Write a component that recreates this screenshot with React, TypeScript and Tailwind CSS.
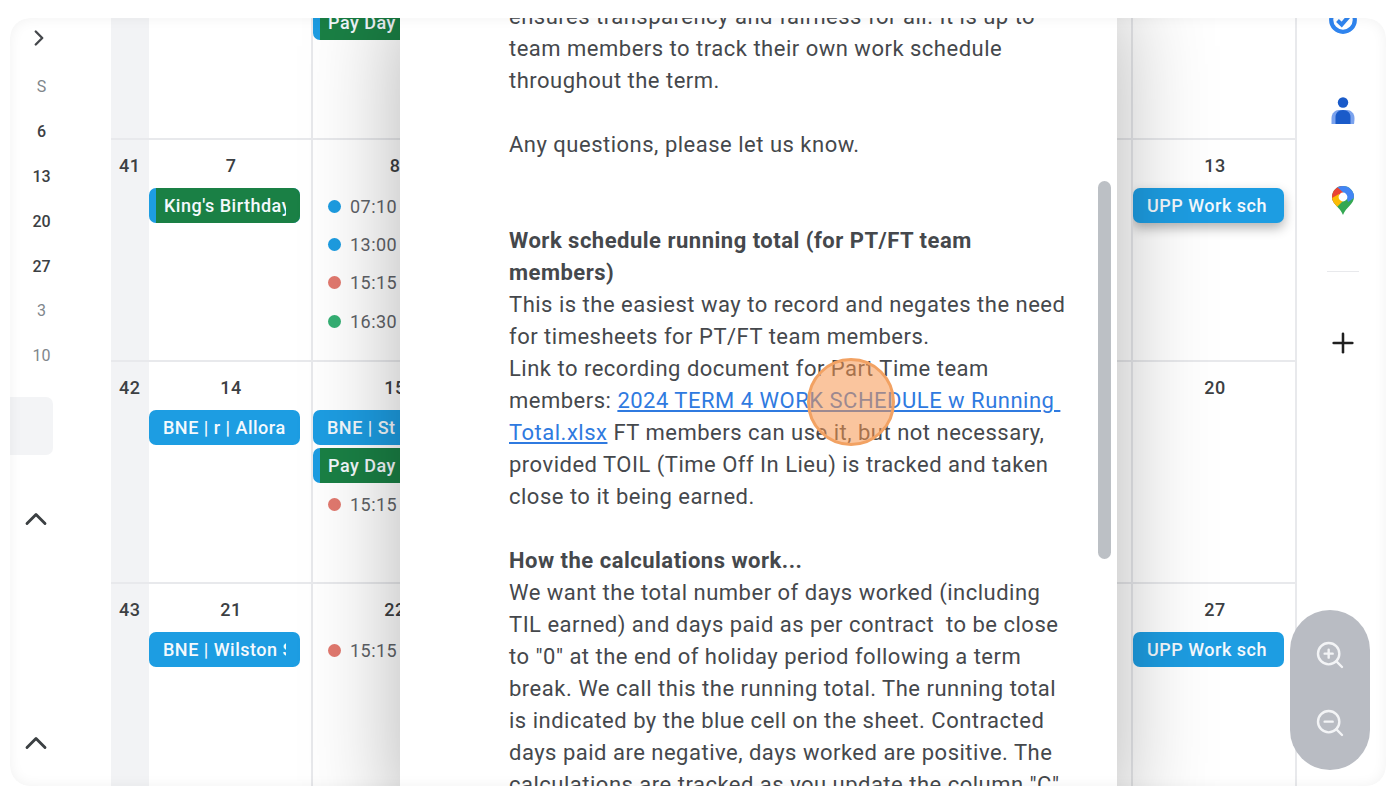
import { ChevronRight, ChevronUp, Plus, ZoomIn, ZoomOut } from "lucide-react";

type Chip = { label: string; kind: "blue" | "green"; raised?: boolean };
type Dot = { time: string; color: string };
type Day = { num?: string; chips?: Chip[]; dots?: Dot[]; pull?: boolean };

const BLUE = "bg-[#1d9de2]";
const DOT_BLUE = "bg-[#1d9de2]";
const DOT_RED = "bg-[#e2796f]";
const DOT_GREEN = "bg-[#35b074]";

const empty: Day = {};

const rows: { week?: string; height: string; days: Day[] }[] = [
  {
    height: "h-[122px] border-b-2",
    days: [empty, { chips: [{ label: "Pay Day", kind: "green" }], pull: true }, empty, empty, empty, empty, empty],
  },
  {
    week: "41",
    height: "h-[222px] border-b-2",
    days: [
      { num: "7", chips: [{ label: "King's Birthday", kind: "green" }] },
      {
        num: "8",
        dots: [
          { time: "07:10", color: DOT_BLUE },
          { time: "13:00", color: DOT_BLUE },
          { time: "15:15", color: DOT_RED },
          { time: "16:30", color: DOT_GREEN },
        ],
      },
      empty,
      empty,
      empty,
      empty,
      { num: "13", chips: [{ label: "UPP Work sch", kind: "blue", raised: true }] },
    ],
  },
  {
    week: "42",
    height: "h-[222px] border-b-2",
    days: [
      { num: "14", chips: [{ label: "BNE | r | Allora", kind: "blue" }] },
      {
        num: "15",
        chips: [
          { label: "BNE | St", kind: "blue" },
          { label: "Pay Day", kind: "green" },
        ],
        dots: [{ time: "15:15", color: DOT_RED }],
      },
      empty,
      empty,
      empty,
      empty,
      { num: "20" },
    ],
  },
  {
    week: "43",
    height: "h-[230px]",
    days: [
      { num: "21", chips: [{ label: "BNE | Wilston South", kind: "blue" }] },
      { num: "22", dots: [{ time: "15:15", color: DOT_RED }] },
      empty,
      empty,
      empty,
      empty,
      { num: "27", chips: [{ label: "UPP Work sch", kind: "blue" }] },
    ],
  },
];

function EventChip({ chip }: { chip: Chip }) {
  return (
    <div
      className={`flex h-[35px] w-[151px] overflow-hidden rounded-[7px] ${BLUE} ${
        chip.raised ? "shadow-[0_5px_12px_rgba(0,0,0,0.3)]" : ""
      }`}
    >
      {chip.kind === "green" && <div className="w-[7px] shrink-0" />}
      <div
        className={`flex min-w-0 flex-1 items-center pr-[14px] ${
          chip.kind === "green" ? "bg-[#1a8045] pl-[8px]" : "pl-[14px]"
        }`}
      >
        <span className="overflow-hidden text-[18px] leading-[35px] font-medium tracking-[0.5px] whitespace-nowrap text-[#f4f9fd]">
          {chip.label}
        </span>
      </div>
    </div>
  );
}

function DayCell({ day }: { day: Day }) {
  return (
    <div className="min-w-0 overflow-hidden border-r-2 border-[#e8e9ec]">
      {day.pull ? (
        <div className="-mt-[13px]">
          {day.chips?.map((c) => <EventChip key={c.label} chip={c} />)}
        </div>
      ) : (
        <>
          <div className="h-[48px] pt-[14px] pl-[2px] text-center text-[18px] leading-[24px] font-medium tracking-[0.5px] text-[#3c4043]">
            {day.num}
          </div>
          <div className="flex flex-col gap-[3px]">
            {day.chips?.map((c) => <EventChip key={c.label} chip={c} />)}
          </div>
          {day.dots && (
            <div className={`flex flex-col ${day.chips ? "mt-[2px]" : "-mt-[1px]"}`}>
              {day.dots.map((d, i) => (
                <div key={i} className="flex h-[38.4px] items-center gap-[9px] pl-[15px]">
                  <span className={`h-[13px] w-[13px] shrink-0 rounded-full ${d.color}`} />
                  <span className="text-[18px] tracking-[0.45px] text-[#5f6368]">{d.time}</span>
                </div>
              ))}
            </div>
          )}
        </>
      )}
    </div>
  );
}

function MiniCalendar() {
  const items = [
    { t: "S", dim: true },
    { t: "6" },
    { t: "13" },
    { t: "20" },
    { t: "27" },
    { t: "3", dim: true },
    { t: "10", dim: true },
  ];
  return (
    <aside className="w-[101px] shrink-0">
      <div className="flex h-[40px] items-center pl-[16px]">
        <ChevronRight size={26} strokeWidth={2.2} className="text-[#45484c]" />
      </div>
      <div className="mt-[7px] w-[63px]">
        {items.map((i) => (
          <div
            key={i.t}
            className={`flex h-[44.8px] items-center justify-center text-[16px] ${
              i.dim ? "text-[#80868b]" : "font-medium text-[#3c4043]"
            }`}
          >
            {i.t}
          </div>
        ))}
      </div>
      <div className="mt-[18.6px] h-[58px] w-[43px] rounded-r-[7px] bg-[#f3f4f6]" />
      <div className="mt-[46px] ml-[8px]">
        <ChevronUp size={36} strokeWidth={1.9} className="text-[#3c4043]" />
      </div>
      <div className="mt-[188px] ml-[8px]">
        <ChevronUp size={36} strokeWidth={1.9} className="text-[#3c4043]" />
      </div>
    </aside>
  );
}

function TasksIcon() {
  return (
    <svg width="28" height="28" viewBox="0 0 28 28" fill="none" className="-mt-[12px] shrink-0">
      <circle cx="14" cy="14" r="11.8" stroke="#2f84ee" strokeWidth="4.2" />
      <path d="M8.5 14.5l4.2 4 7-8" stroke="#2f84ee" strokeWidth="4" />
    </svg>
  );
}

function ContactsIcon() {
  return (
    <svg width="24" height="27" viewBox="0 0 24 27" className="mt-[63px] shrink-0">
      <circle cx="12" cy="5.5" r="5.2" fill="#1a5bc9" />
      <path d="M0.5 27v-6c0-5 4-8 7-8h9c3 0 7 3 7 8 0 3-.5 6-.5 6z" fill="#7ba3ee" />
      <path d="M4.5 27v-7c0-4 3-7 7.5-7s7.5 3 7.5 7v7z" fill="#1a5bc9" />
    </svg>
  );
}

function MapsIcon() {
  return (
    <svg width="22" height="29" viewBox="0 0 22 29" className="mt-[62px] shrink-0">
      <defs>
        <clipPath id="pin">
          <path d="M11 0C4.9 0 0 4.9 0 11c0 7 8 10 11 18 3-8 11-11 11-18C22 4.9 17.1 0 11 0z" />
        </clipPath>
      </defs>
      <g clipPath="url(#pin)">
        <rect width="22" height="29" fill="#34a853" />
        <path d="M0 0h11v8L2 18H0z" fill="#ea4335" />
        <path d="M4 0h18v9H14z" fill="#4285f4" />
        <path d="M22 5v7l-6 4-2-6z" fill="#4285f4" />
        <path d="M0 12l7-4 5 6-8 8-4-4z" fill="#fbbc04" />
      </g>
      <circle cx="11" cy="11" r="4.4" fill="#fff" />
    </svg>
  );
}

function AppRail() {
  return (
    <aside className="flex w-[89px] shrink-0 flex-col items-center pl-[3px]">
      <TasksIcon />
      <ContactsIcon />
      <MapsIcon />
      <div className="mt-[56px] h-px w-[32px] bg-[#e8e9ec]" />
      <Plus size={32} strokeWidth={1.9} className="mt-[55px] shrink-0 text-[#1f1f1f]" />
    </aside>
  );
}

function Line({ children }: { children?: React.ReactNode }) {
  return <div className="h-[32px] whitespace-pre">{children}</div>;
}

function Dialog() {
  return (
    <div className="absolute top-[-17px] bottom-[-40px] left-[390px] w-[717px] overflow-hidden bg-white pl-[109px] text-[22px] leading-[32px] tracking-[0.5px] text-[#45484c] shadow-[0_0_90px_rgba(0,0,0,0.3)]">
      <Line>ensures transparency and fairness for all. It is up to</Line>
      <Line>team members to track their own work schedule</Line>
      <Line>throughout the term.</Line>
      <Line />
      <Line>Any questions, please let us know.</Line>
      <Line />
      <Line />
      <Line>
        <b className="font-bold">Work schedule running total (for PT/FT team</b>
      </Line>
      <Line>
        <b className="font-bold">members)</b>
      </Line>
      <Line>This is the easiest way to record and negates the need</Line>
      <Line>for timesheets for PT/FT team members.</Line>
      <Line>Link to recording document for Part Time team</Line>
      <Line>
        members: <a className="text-[#2f7ae0] underline">2024 TERM 4 WORK SCHEDULE w Running </a>
      </Line>
      <Line>
        <a className="text-[#2f7ae0] underline">Total.xlsx</a> FT members can use it, but not necessary,
      </Line>
      <Line>provided TOIL (Time Off In Lieu) is tracked and taken</Line>
      <Line>close to it being earned.</Line>
      <Line />
      <Line>
        <b className="font-bold">How the calculations work...</b>
      </Line>
      <Line>We want the total number of days worked (including</Line>
      <Line>TIL earned) and days paid as per contract  to be close</Line>
      <Line>to "0" at the end of holiday period following a term</Line>
      <Line>break. We call this the running total. The running total</Line>
      <Line>is indicated by the blue cell on the sheet. Contracted</Line>
      <Line>days paid are negative, days worked are positive. The</Line>
      <Line>calculations are tracked as you update the column "C"</Line>
      <div className="absolute top-[180px] right-[6px] h-[378px] w-[13px] rounded-full bg-[#bcc0c5]" />
    </div>
  );
}

export default function App() {
  return (
    <div className="h-[806px] w-[1392px] overflow-hidden bg-white pt-[18px] pl-[10px] font-['Roboto',sans-serif]">
      <div className="relative flex h-[768px] w-[1376px] overflow-hidden rounded-[20px] bg-white">
        <MiniCalendar />
        <div className="w-[1186px] shrink-0">
          {rows.map((row, r) => (
            <div
              key={r}
              className={`grid grid-cols-[38px_repeat(7,164px)] border-[#e8e9ec] ${row.height}`}
            >
              <div className="bg-[#f2f3f5] pt-[14px] pl-[8px] text-[18px] leading-[24px] font-medium tracking-[0.5px] text-[#3c4043]">
                {row.week}
              </div>
              {row.days.map((d, i) => (
                <DayCell key={i} day={d} />
              ))}
            </div>
          ))}
        </div>
        <AppRail />
        <Dialog />
        <div className="absolute top-[340px] left-[797px] h-[88px] w-[88px] rounded-full border-[3px] border-[#f2a263] bg-[#f5954f]/55" />
        <div className="absolute top-[592px] left-[1280px] flex h-[160px] w-[80px] flex-col items-center gap-[36px] rounded-full bg-[#b9bcc3] pt-[29px]">
          <ZoomIn size={32} strokeWidth={1.8} className="text-[#f3f4f6]" />
          <ZoomOut size={32} strokeWidth={1.8} className="text-[#f3f4f6]" />
        </div>
        <div className="pointer-events-none absolute inset-0 rounded-[20px] shadow-[inset_0_0_14px_rgba(0,0,0,0.06)]" />
      </div>
    </div>
  );
}
